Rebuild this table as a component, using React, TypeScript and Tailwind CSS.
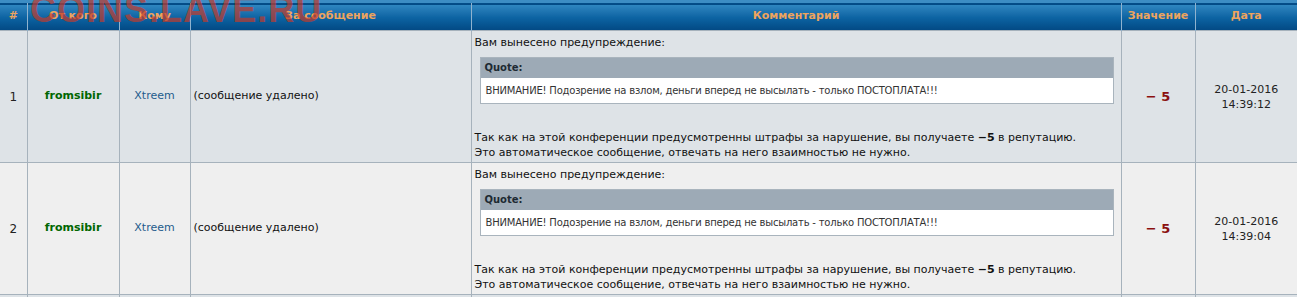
const rows = [
  { n: 1, date: "20-01-2016", time: "14:39:12", bg: "bg-[#dee3e7]" },
  { n: 2, date: "20-01-2016", time: "14:39:04", bg: "bg-[#efefef]" },
  { n: 3, date: "", time: "", bg: "bg-[#dee3e7]" },
];

const th =
  "border-x border-[#8fb3cf] h-[29px] p-0 text-[11px] font-bold text-[#eda45e] text-center align-middle";
const td = "border border-[#a6b2bc] text-[11px] align-middle";

const App = () => {
  return (
    <div className="relative w-[1297px] h-[297px] overflow-hidden bg-white font-['DejaVu_Sans',Verdana,sans-serif]">
      <table className="w-[1297px] border-collapse table-fixed">
        <colgroup>
          <col className="w-[27px]" />
          <col className="w-[92px]" />
          <col className="w-[71px]" />
          <col className="w-[281px]" />
          <col className="w-[650px]" />
          <col className="w-[74px]" />
          <col className="w-[102px]" />
        </colgroup>
        <thead>
          <tr className="bg-gradient-to-b from-[#2f86c0] via-[#0d64a3] to-[#034a85] border-t-[3px] border-t-[#3d8dc4] border-b border-b-[#7fa6c4]">
            <th className={th + " border-l-0"}>#</th>
            <th className={th}>От кого</th>
            <th className={th}>Кому</th>
            <th className={th}>За сообщение</th>
            <th className={th}>Комментарий</th>
            <th className={th}>Значение</th>
            <th className={th + " border-r-0"}>Дата</th>
          </tr>
        </thead>
        <tbody>
          {rows.map((r) => (
            <tr key={r.n} className={r.bg + " h-[132px]"}>
              <td className={td + " border-l-0 text-center text-[12px] text-[#222]"}>
                {r.n < 3 ? r.n : ""}
              </td>
              <td className={td + " text-center text-[11.5px] font-bold text-[#006600]"}>
                {r.n < 3 ? "fromsibir" : ""}
              </td>
              <td className={td + " text-center text-[#1f5c8c]"}>
                {r.n < 3 ? "Xtreem" : ""}
              </td>
              <td className={td + " pl-[3px] text-[10px] text-[#111]"}>
                {r.n < 3 ? "(сообщение удалено)" : ""}
              </td>
              <td className={td + " align-top px-[3px] pt-[4px] text-[#111] leading-[15px]"}>
                {r.n < 3 && (
                  <div>
                    <div>Вам вынесено предупреждение:</div>
                    <div className="mt-[7px] ml-[5px] mr-[4px] border border-[#a9b4bd]">
                      <div className="h-[20px] bg-[#9daab6] pl-[4px] text-[10px] font-bold leading-[20px] text-[#1e2a33]">
                        Quote:
                      </div>
                      <div className="h-[25px] bg-white pl-[5px] text-[10px] tracking-[-0.2px] leading-[25px] text-[#333]">
                        ВНИМАНИЕ! Подозрение на взлом, деньги вперед не высылать - только ПОСТОПЛАТА!!!
                      </div>
                    </div>
                    <div className="mt-[26px]">
                      Так как на этой конференции предусмотренны штрафы за нарушение, вы получаете{" "}
                      <b>−5</b> в репутацию.
                    </div>
                    <div>Это автоматическое сообщение, отвечать на него взаимностью не нужно.</div>
                  </div>
                )}
              </td>
              <td className={td + " text-center text-[13px] font-bold text-[#8b1010]"}>
                {r.n < 3 ? "− 5" : ""}
              </td>
              <td className={td + " border-r-0 text-center text-[#222] leading-[15px]"}>
                {r.n < 3 && (
                  <>
                    <div>{r.date}</div>
                    <div>{r.time}</div>
                  </>
                )}
              </td>
            </tr>
          ))}
        </tbody>
      </table>
      <div className="absolute left-[30px] top-[-17px] text-[36px] font-bold tracking-[1px] text-[#c43a2a]/70 font-['Liberation_Sans',Arial,sans-serif] pointer-events-none">
        COINS.LAVE.RU
      </div>
    </div>
  );
};

export default App;
